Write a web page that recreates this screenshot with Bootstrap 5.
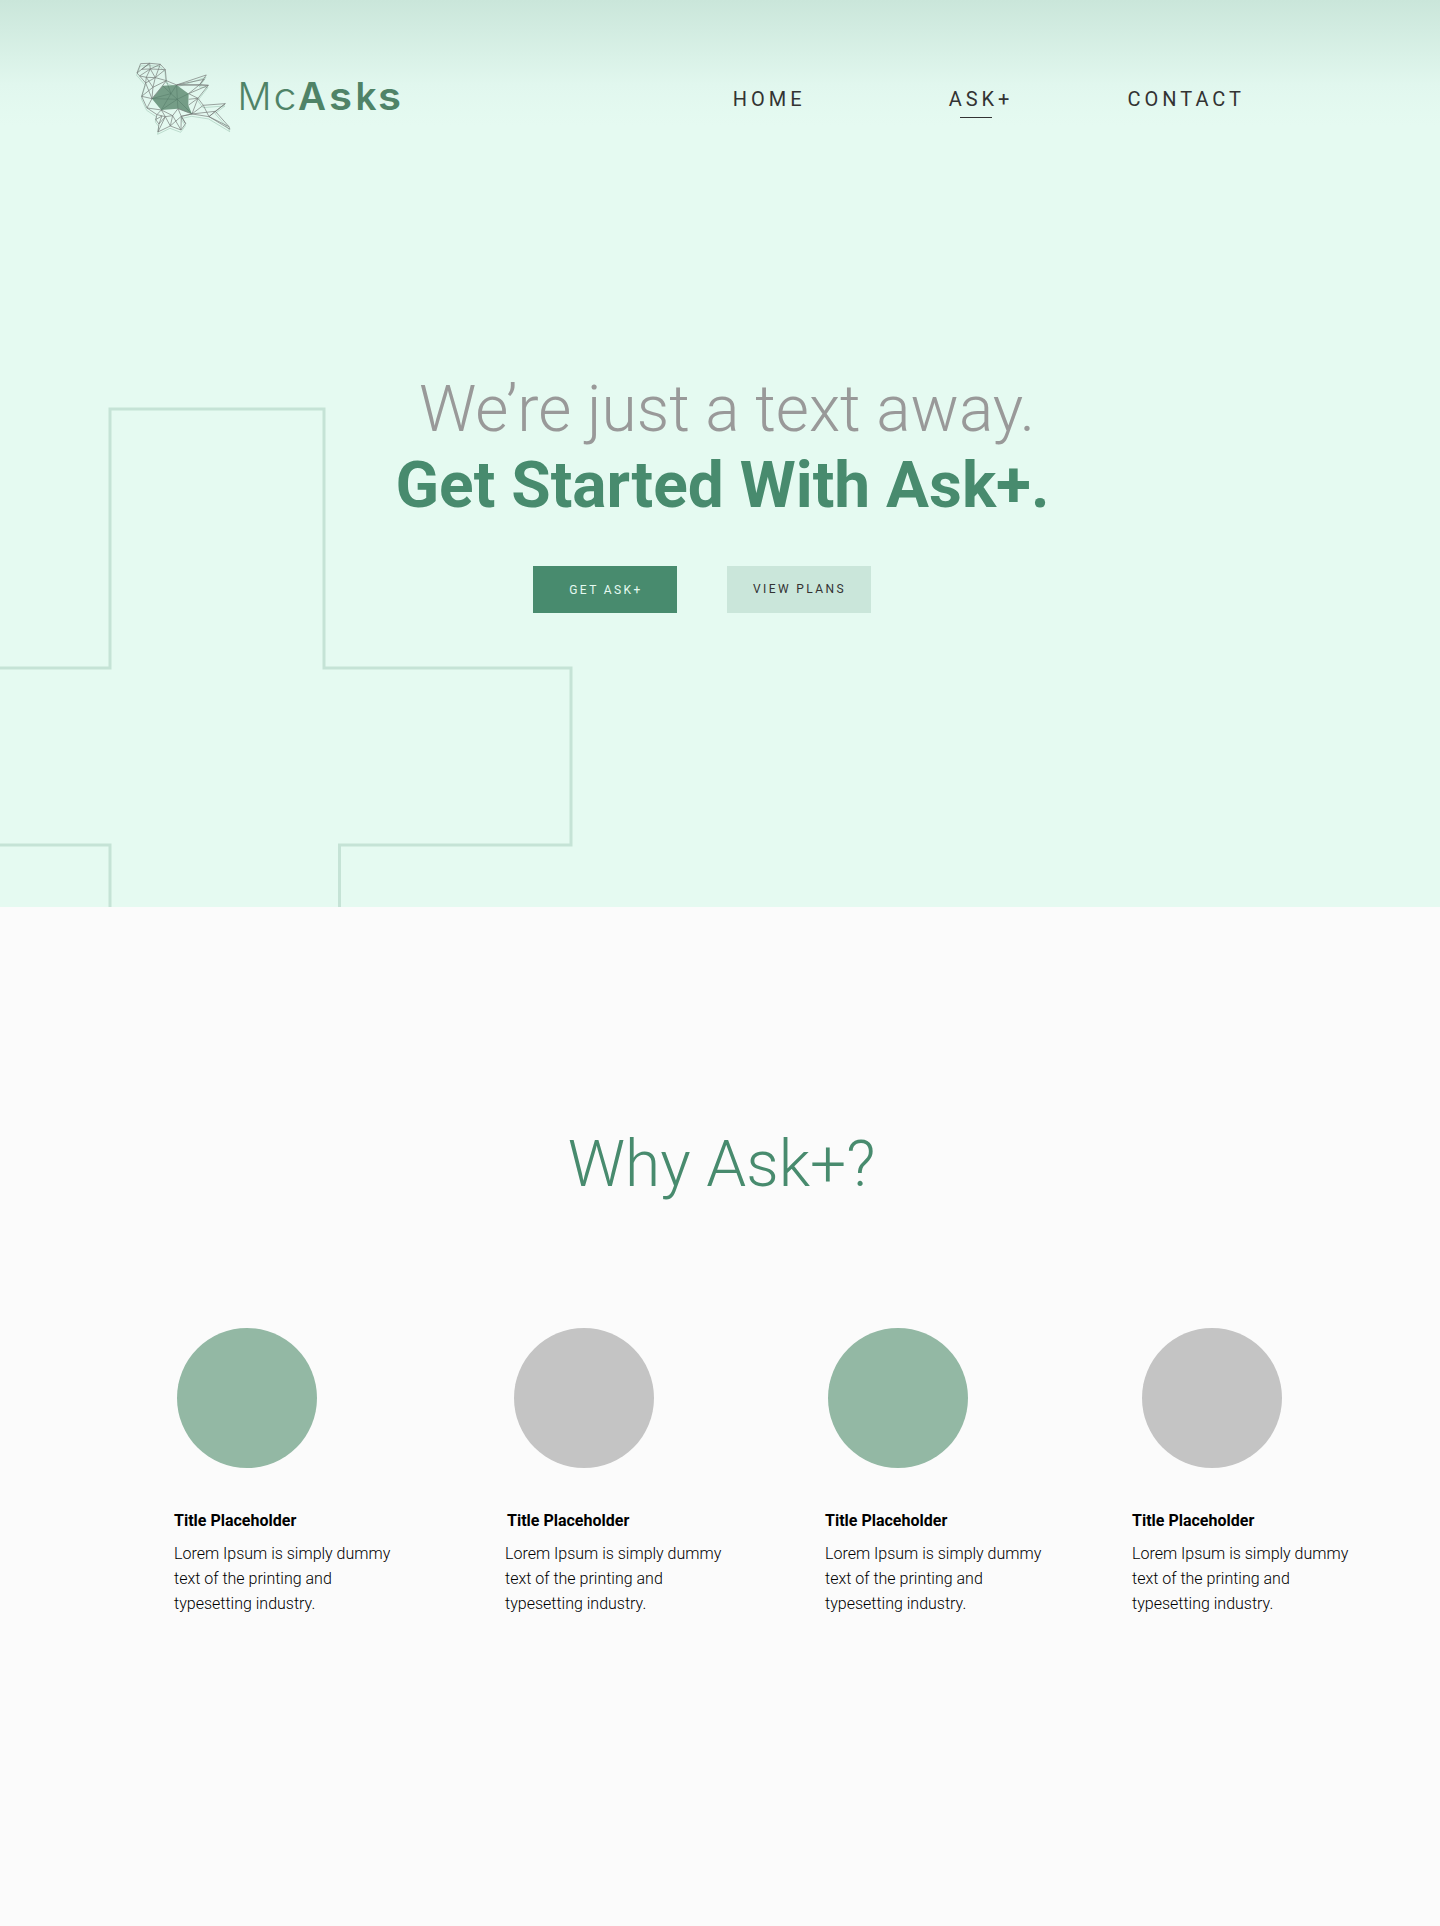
<!DOCTYPE html>
<html lang="en">
<head>
<meta charset="utf-8">
<meta name="viewport" content="width=device-width, initial-scale=1">
<title>McAsks</title>
<link href="https://cdn.jsdelivr.net/npm/bootstrap@5.3.0/dist/css/bootstrap.min.css" rel="stylesheet">
<style>
body{font-family:Roboto,sans-serif;background:#fbfbfb;color:#000}
.hero{height:907px;background:linear-gradient(#cae6da 0,#e1f7ee 85px,#e5faf1 125px);overflow:hidden}
.plus-outline{left:0;top:0;pointer-events:none}
.topbar{padding:59px 199px 0 134px;height:140px}
.main-links{padding-top:24px}
.main-links a{font-size:20px;line-height:32px;letter-spacing:.2em;margin-right:-4px;padding:0;color:#333}
.main-links a:first-child{margin-right:143px}
.main-links a.active{margin-right:114px;color:#333}
.main-links a.active::after{content:"";position:absolute;left:11px;top:34px;width:32px;height:1px;background:#333}
.headline{font-size:64px;line-height:75px;padding-top:232px}
.headline .soft{color:#999;font-weight:300;padding-left:14px}
.headline .strong{color:#488b6e;font-weight:700;padding-left:5px;padding-top:1px}
.actions{gap:50px;padding:43px 36px 0 0}
.actions .btn{width:144px;height:47px;border:0;border-radius:0;font-size:12px;letter-spacing:.2em;padding:0 0 0 1px;line-height:47px}
.actions .btn-ask{background:#488b6e;color:#e5faf1;padding-top:1px;padding-left:2px}
.btn-plans{background:#cae6da;color:#333}
.why{padding-top:220px}
.why h2{font-size:64px;line-height:75px;font-weight:300;color:#488b6e;padding-left:3px}
.benefits{margin-top:126px;padding-left:174px}
.benefit{width:331px;flex:none}
.benefit:nth-child(2){width:320px}
.benefit:nth-child(3){width:307px}
.benefit:nth-child(4){width:240px}
.benefit .disc{width:140px;height:140px;border-radius:50%;background:#c4c4c4;margin-left:3px}
.benefit:nth-child(2) .disc{margin-left:9px}
.benefit:nth-child(2) h3{padding-left:2px}
.benefit:nth-child(4) .disc{margin-left:10px}
.benefit .green{background:#93b8a4}
.benefit h3{font-size:16px;line-height:19px;font-weight:700;margin:43px 0 11px}
.benefit p{font-size:16px;line-height:25px;font-weight:300;width:230px}
</style>
</head>
<body>
<section class="hero position-relative">
<svg class="plus-outline position-absolute" width="600" height="907" fill="none" stroke="#c5e3d6" stroke-width="3"><path d="M-10 668H110V409H324V668H571V845H339.500V920M-10 845H110V920"/></svg>
<header class="topbar d-flex justify-content-between position-relative">
<svg width="280" height="80" viewBox="134 59 280 80" role="img" aria-label="McAsks">
<defs>
<path id="bird-edge" d="M31 25L58 24L90 27L105 43L108 76L139 89L228 59L208 88L234 90L203 129L219 150L285 145L255 168L296 214L299 222L236 184L185 176L153 183L166 205L152 224L120 212L83 230L86 206L76 193L80 178L50 158L34 123L46 83L28 62L20 53Z"/>
</defs>
<g transform="translate(130.300 55.300) scale(.33333)" fill="none" stroke-linejoin="round">
<use href="#bird-edge" stroke="#7fae98" stroke-opacity=".4" stroke-width="3" transform="translate(-1 7)"/>
<path fill="#759d87" d="M97 91L139 89L175 115L174 150L185 176L143 160L93 164L65 130Z"/>
<g stroke="#777d7a" stroke-width="2.100">
<use href="#bird-edge"/>
<path d="M20 53L58 24L34 42L60 41L90 27L75 67L48 66L60 41L28 62M58 24L60 41L75 67L105 43L60 41M28 62L48 66L46 83L75 67L108 76M48 66L68 96M75 67L68 96L108 76L97 91L65 130L68 96L34 123L65 130L50 158L93 164L80 178M46 83L65 130M139 89L208 88L222 72L139 89M139 89L234 90L175 115L208 88M175 115L203 129L174 150M185 176L203 129M203 129L175 132M143 160L185 176L153 183L143 160L127 181L93 164M185 176L219 150L236 184L255 168M185 176L255 168M236 184L285 145M236 184L296 214M95 182L86 206L105 184L83 230M120 212L105 184L80 178M93 164L105 184L127 181L120 212L153 183L166 205M153 183L152 224L127 181M76 193L95 182"/>
<path stroke="#507563" stroke-opacity=".65" d="M108 76L122 115L93 164M97 91L122 115L65 130L141 132L122 115L139 89L141 132L93 164M175 115L141 132L143 160M141 132L185 176"/>
</g>
</g>
<g fill="#4f8367" font-family="Inter, sans-serif" font-size="38.500">
<g font-weight="300"><text x="237.500" y="110" textLength="34" lengthAdjust="spacingAndGlyphs">M</text><text x="273.500" y="110" textLength="23" lengthAdjust="spacingAndGlyphs">c</text></g>
<g font-weight="600"><text x="298" y="110" textLength="28" lengthAdjust="spacingAndGlyphs">A</text><text x="329" y="110" textLength="23" lengthAdjust="spacingAndGlyphs">s</text><text x="355.500" y="110" textLength="21" lengthAdjust="spacingAndGlyphs">k</text><text x="378" y="110" textLength="23" lengthAdjust="spacingAndGlyphs">s</text></g>
</g>
</svg>
<nav class="nav main-links align-items-start flex-nowrap"><a class="nav-link" href="#">HOME</a><a class="nav-link active position-relative" href="#">ASK+</a><a class="nav-link" href="#">CONTACT</a></nav>
</header>
<h1 class="headline text-center mb-0"><span class="soft d-block">We’re just a text away.</span><span class="strong d-block">Get Started With Ask+.</span></h1>
<div class="actions d-flex justify-content-center"><a class="btn btn-ask" href="#">GET ASK+</a><a class="btn btn-plans" href="#">VIEW PLANS</a></div>
</section>
<section class="why">
<h2 class="text-center mb-0">Why Ask+?</h2>
<div class="benefits d-flex">
<article class="benefit"><div class="disc green"></div><h3>Title Placeholder</h3><p class="mb-0">Lorem Ipsum is simply dummy text of the printing and typesetting industry.</p></article>
<article class="benefit"><div class="disc"></div><h3>Title Placeholder</h3><p class="mb-0">Lorem Ipsum is simply dummy text of the printing and typesetting industry.</p></article>
<article class="benefit"><div class="disc green"></div><h3>Title Placeholder</h3><p class="mb-0">Lorem Ipsum is simply dummy text of the printing and typesetting industry.</p></article>
<article class="benefit"><div class="disc"></div><h3>Title Placeholder</h3><p class="mb-0">Lorem Ipsum is simply dummy text of the printing and typesetting industry.</p></article>
</div>
</section>
<script src="https://cdn.jsdelivr.net/npm/bootstrap@5.3.0/dist/js/bootstrap.bundle.min.js"></script>
</body>
</html>
